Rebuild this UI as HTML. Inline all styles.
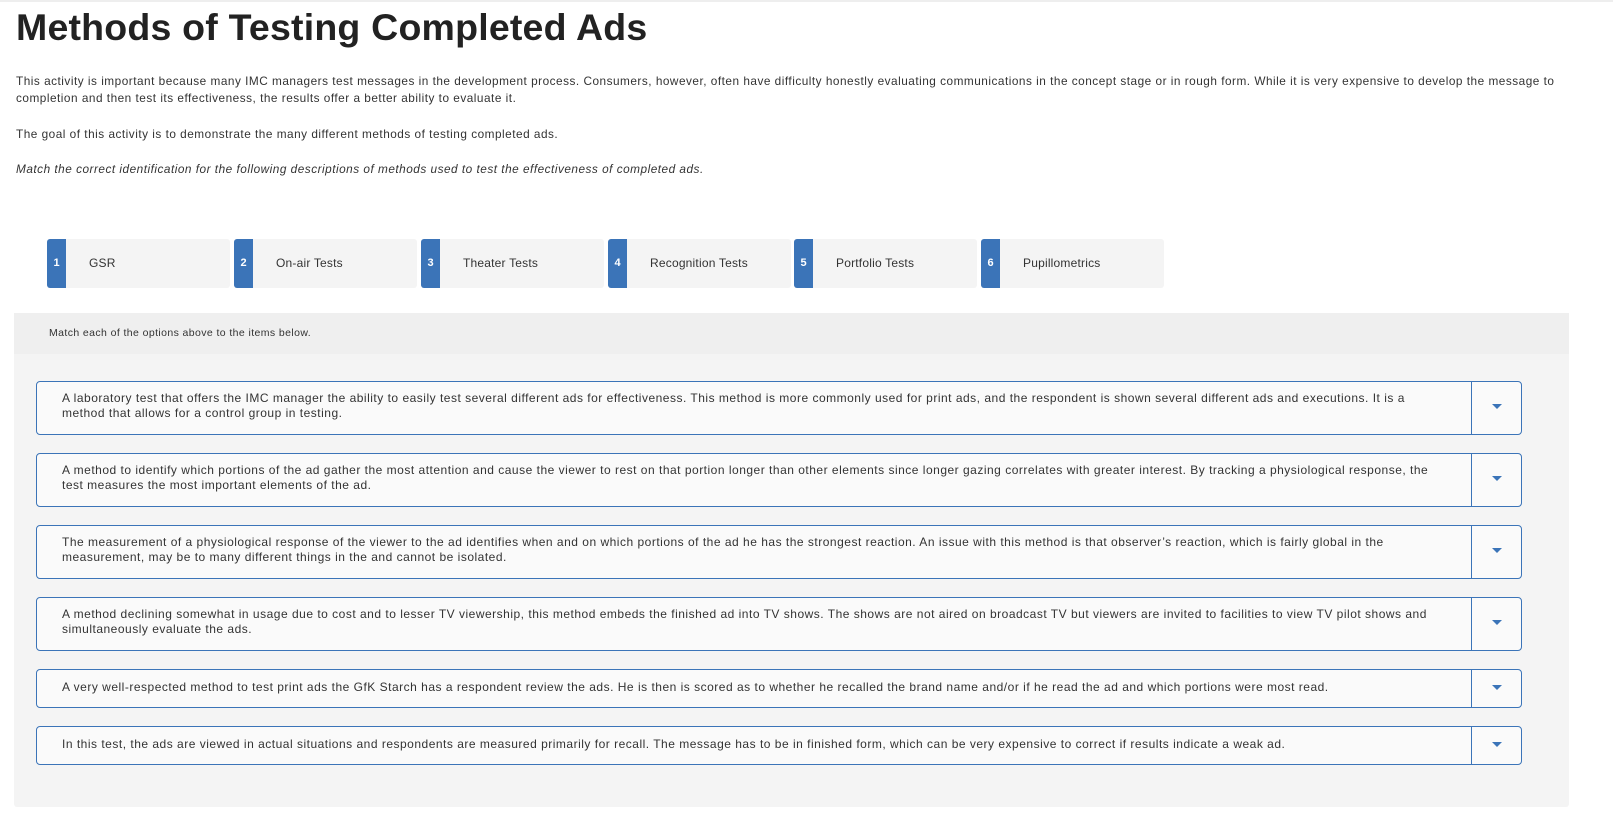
<!DOCTYPE html>
<html><head><meta charset="utf-8"><style>
*{box-sizing:border-box;margin:0;padding:0}
body{width:1613px;height:817px;background:#fff;font-family:"Liberation Sans",Arial,sans-serif;color:#333;position:relative;overflow:hidden;border-top:2px solid #eee}
h1{position:absolute;left:16px;top:4px;font-size:37.5px;font-weight:bold;color:#222;letter-spacing:0.2px}
.p{position:absolute;left:16px;font-size:11.8px;letter-spacing:0.5px;line-height:17px;color:#333;width:1570px}
.chip{position:absolute;top:237px;width:183px;height:49px;background:#f4f4f4;border-radius:3px;overflow:hidden}
.chip b{position:absolute;left:0;top:0;width:19px;height:49px;background:#3b74b8;color:#fff;font-size:11px;line-height:49px;text-align:center}
.chip span{position:absolute;left:42px;top:0;line-height:49px;font-size:12px;letter-spacing:0.2px;color:#333}
.panel{position:absolute;left:14px;top:311px;width:1555px;height:494px;background:#f4f4f4;border-radius:3px}
.ph{height:41px;background:#efefef;font-size:10.5px;letter-spacing:0.4px;line-height:41px;padding-left:35px;color:#333}
.item{position:absolute;left:36px;width:1486px;background:#fafafa;border:1.5px solid #3b74b8;border-radius:4px}
.item .t{position:absolute;left:25px;right:80px;font-size:12px;letter-spacing:0.5px;line-height:15px;color:#333}
.item .d{position:absolute;right:0;top:0;bottom:0;width:50px;border-left:1.5px solid #3b74b8}
.item .d:after{content:"";position:absolute;left:20px;top:50%;margin-top:-4px;border-left:5px solid transparent;border-right:5px solid transparent;border-top:5px solid #3b74b8}
</style></head><body>
<h1>Methods of Testing Completed Ads</h1>
<div class="p" style="top:71px">This activity is important because many IMC managers test messages in the development process. Consumers, however, often have difficulty honestly evaluating communications in the concept stage or in rough form. While it is very expensive to develop the message to completion and then test its effectiveness, the results offer a better ability to evaluate it.</div>
<div class="p" style="top:124px">The goal of this activity is to demonstrate the many different methods of testing completed ads.</div>
<div class="p" style="top:159px;font-style:italic">Match the correct identification for the following descriptions of methods used to test the effectiveness of completed ads.</div>

<div class="chip" style="left:47px"><b>1</b><span>GSR</span></div>
<div class="chip" style="left:234px"><b>2</b><span>On-air Tests</span></div>
<div class="chip" style="left:421px"><b>3</b><span>Theater Tests</span></div>
<div class="chip" style="left:608px"><b>4</b><span>Recognition Tests</span></div>
<div class="chip" style="left:794px"><b>5</b><span>Portfolio Tests</span></div>
<div class="chip" style="left:981px"><b>6</b><span>Pupillometrics</span></div>

<div class="panel"><div class="ph">Match each of the options above to the items below.</div></div>

<div class="item" style="top:379px;height:54px"><div class="t" style="top:9px">A laboratory test that offers the IMC manager the ability to easily test several different ads for effectiveness. This method is more commonly used for print ads, and the respondent is shown several different ads and executions. It is a method that allows for a control group in testing.</div><div class="d"></div></div>
<div class="item" style="top:451px;height:54px"><div class="t" style="top:9px">A method to identify which portions of the ad gather the most attention and cause the viewer to rest on that portion longer than other elements since longer gazing correlates with greater interest. By tracking a physiological response, the test measures the most important elements of the ad.</div><div class="d"></div></div>
<div class="item" style="top:523px;height:54px"><div class="t" style="top:9px">The measurement of a physiological response of the viewer to the ad identifies when and on which portions of the ad he has the strongest reaction. An issue with this method is that observer’s reaction, which is fairly global in the measurement, may be to many different things in the and cannot be isolated.</div><div class="d"></div></div>
<div class="item" style="top:595px;height:54px"><div class="t" style="top:9px">A method declining somewhat in usage due to cost and to lesser TV viewership, this method embeds the finished ad into TV shows. The shows are not aired on broadcast TV but viewers are invited to facilities to view TV pilot shows and simultaneously evaluate the ads.</div><div class="d"></div></div>
<div class="item" style="top:667px;height:39px"><div class="t" style="top:10px">A very well-respected method to test print ads the GfK Starch has a respondent review the ads. He is then is scored as to whether he recalled the brand name and/or if he read the ad and which portions were most read.</div><div class="d"></div></div>
<div class="item" style="top:724px;height:39px"><div class="t" style="top:10px">In this test, the ads are viewed in actual situations and respondents are measured primarily for recall. The message has to be in finished form, which can be very expensive to correct if results indicate a weak ad.</div><div class="d"></div></div>
</body></html>
